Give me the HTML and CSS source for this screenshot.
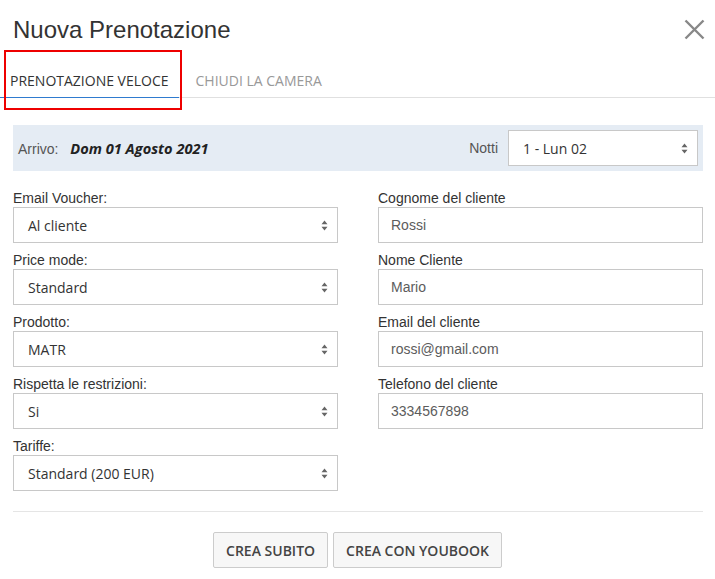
FILE: index.html
```html
<!DOCTYPE html>
<html lang="it">
<head>
<meta charset="utf-8">
<title>Nuova Prenotazione</title>
<link rel="stylesheet" href="styles.css">
</head>
<body>
<div class="modal">
  <header class="modal-header">
    <h1 class="title">Nuova Prenotazione</h1>
    <button class="close" aria-label="Chiudi">
      <svg width="21" height="21" viewBox="0 0 21 21"><path d="M1.5 1.5 L19.5 19.5 M19.5 1.5 L1.5 19.5" stroke="#888" stroke-width="2.4" fill="none"/></svg>
    </button>
  </header>
  <nav class="tabs">
    <div class="tab active">PRENOTAZIONE VELOCE</div>
    <div class="tab">CHIUDI LA CAMERA</div>
    <div class="highlight"></div>
  </nav>
  <section class="arrival">
    <div class="arrival-left">
      <span class="muted">Arrivo:</span>
      <span class="date">Dom 01 Agosto 2021</span>
    </div>
    <div class="arrival-right">
      <span class="muted">Notti</span>
      <div class="select notti"><span>1 - Lun 02</span>
        <svg class="arrows" width="7" height="11" viewBox="0 0 7 11"><path d="M3.5 0.5 L6.5 4.3 L0.5 4.3 Z M0.5 6.7 L6.5 6.7 L3.5 10.5 Z" fill="#666"/></svg>
      </div>
    </div>
  </section>
  <section class="form">
    <div class="col">
      <div class="field"><label>Email Voucher:</label>
        <div class="select"><span>Al cliente</span><svg class="arrows" width="7" height="11" viewBox="0 0 7 11"><path d="M3.5 0.5 L6.5 4.3 L0.5 4.3 Z M0.5 6.7 L6.5 6.7 L3.5 10.5 Z" fill="#666"/></svg></div></div>
      <div class="field"><label>Price mode:</label>
        <div class="select"><span>Standard</span><svg class="arrows" width="7" height="11" viewBox="0 0 7 11"><path d="M3.5 0.5 L6.5 4.3 L0.5 4.3 Z M0.5 6.7 L6.5 6.7 L3.5 10.5 Z" fill="#666"/></svg></div></div>
      <div class="field"><label>Prodotto:</label>
        <div class="select"><span>MATR</span><svg class="arrows" width="7" height="11" viewBox="0 0 7 11"><path d="M3.5 0.5 L6.5 4.3 L0.5 4.3 Z M0.5 6.7 L6.5 6.7 L3.5 10.5 Z" fill="#666"/></svg></div></div>
      <div class="field"><label>Rispetta le restrizioni:</label>
        <div class="select"><span>Si</span><svg class="arrows" width="7" height="11" viewBox="0 0 7 11"><path d="M3.5 0.5 L6.5 4.3 L0.5 4.3 Z M0.5 6.7 L6.5 6.7 L3.5 10.5 Z" fill="#666"/></svg></div></div>
      <div class="field"><label>Tariffe:</label>
        <div class="select"><span>Standard (200 EUR)</span><svg class="arrows" width="7" height="11" viewBox="0 0 7 11"><path d="M3.5 0.5 L6.5 4.3 L0.5 4.3 Z M0.5 6.7 L6.5 6.7 L3.5 10.5 Z" fill="#666"/></svg></div></div>
    </div>
    <div class="col">
      <div class="field"><label>Cognome del cliente</label><div class="input">Rossi</div></div>
      <div class="field"><label>Nome Cliente</label><div class="input">Mario</div></div>
      <div class="field"><label>Email del cliente</label><div class="input">rossi@gmail.com</div></div>
      <div class="field"><label>Telefono del cliente</label><div class="input">3334567898</div></div>
    </div>
  </section>
  <hr class="divider">
  <footer class="actions">
    <button class="btn">CREA SUBITO</button>
    <button class="btn">CREA CON YOUBOOK</button>
  </footer>
</div>
</body>
</html>
```
FILE: styles.css
```css
* { box-sizing: border-box; }
html, body { margin: 0; padding: 0; background: #fff; }
body { width: 715px; height: 579px; overflow: hidden; font-family: "Liberation Sans", Arial, sans-serif; color: #333; }

.modal { position: relative; width: 715px; }

.modal-header {
  display: flex; justify-content: space-between; align-items: flex-start;
  padding: 16px 10px 0 13px; height: 50px;
}
.title { margin: 0; font-family: "Liberation Sans", Arial, sans-serif; font-weight: normal; font-size: 24px; line-height: 28px; color: #333; }
.close { border: 0; background: none; padding: 0; margin: 3px 0 0 0; width: 21px; height: 21px; cursor: pointer; }
.close svg { display: block; }

.tabs {
  position: relative;
  display: flex; gap: 7px;
  height: 48px;
  border-bottom: 1px solid #e0e0e0;
  font-family: "Open Sans", sans-serif; font-size: 14px;
}
.tab { position: relative; padding: 21px 10px 6px 10px; line-height: 20px; height: 47px; color: #999; }
.tab.active { color: #333; }
.tab.active::after { content: ""; position: absolute; left: 0; right: 0; bottom: -1px; height: 1px; background: #2f7bcf; }
.highlight { position: absolute; left: 4px; top: 0; width: 178px; height: 60px; border: 2px solid #e00; }

.arrival {
  margin: 27px 12px 0 13px;
  height: 46px; background: #e5ecf4;
  display: flex; justify-content: space-between; align-items: center;
  padding: 0 5px 0 5px;
  font-size: 14px;
}
.muted { color: #555; }
.date { font-family: "Open Sans", sans-serif; font-weight: 700; font-style: italic; font-size: 14.6px; color: #222; margin-left: 8px; }
.arrival-right { display: flex; align-items: center; gap: 10px; }

.select, .input {
  height: 36px; border: 1px solid #c8c8c8; background: #fff;
  display: flex; align-items: center;
}
.select { justify-content: space-between; padding: 0 9px 0 14px; font-family: "Open Sans", sans-serif; font-size: 14px; color: #333; }
.select.notti { width: 190px; }
.arrows { display: block; }
.input { padding: 0 12px; font-size: 14px; color: #5c5c5c; }

.form {
  display: grid; grid-template-columns: 325px 325px; column-gap: 40px;
  padding: 19px 0 0 13px;
}
.field { margin-bottom: 9px; }
.field label { display: block; font-size: 14px; line-height: 17px; color: #333; }
.col .field:last-child { margin-bottom: 0; }

.divider { margin: 20px 12px 0 13px; border: 0; border-top: 1px solid #e5e5e5; height: 0; }

.actions { display: flex; justify-content: center; gap: 5px; padding-top: 20px; }
.btn {
  height: 36px; padding: 0 12px;
  border: 1px solid #ccc; border-radius: 2px; background: #f7f7f7;
  font-family: "Open Sans", sans-serif; font-weight: 600; font-size: 14px; color: #444;
}
```
